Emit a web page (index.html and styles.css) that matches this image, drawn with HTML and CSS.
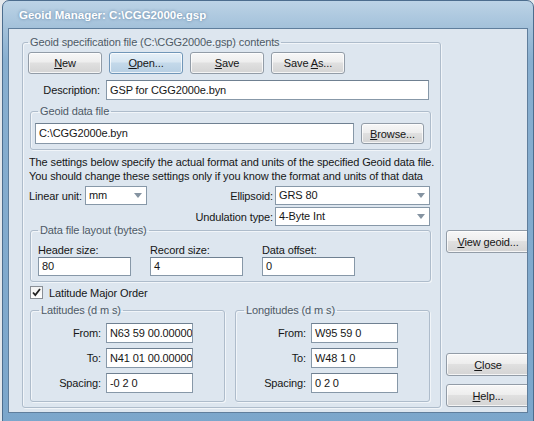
FILE: index.html
```html
<!DOCTYPE html>
<html lang="en">
<head>
	<meta charset="UTF-8">
	<title>Geoid Manager</title>
	<link rel="stylesheet" href="styles.css">
</head>
<body>
	<div class="window">
		<div class="titlebar">
			<span class="title">Geoid Manager: C:\CGG2000e.gsp</span>
		</div>
		<div class="client">
			<fieldset class="group main">
				<legend>Geoid specification file (C:\CGG2000e.gsp) contents</legend>
				<div class="toolbar">
					<button class="btn"><u>N</u>ew</button>
					<button class="btn hot"><u>O</u>pen...</button>
					<button class="btn"><u>S</u>ave</button>
					<button class="btn">Save <u>A</u>s...</button>
				</div>
				<div class="descRow">
					<span class="lbl descLbl">Description:</span>
					<div class="edit descEdit">GSP for CGG2000e.byn</div>
				</div>
				<fieldset class="group dataFile">
					<legend>Geoid data file</legend>
					<div class="fileRow">
						<div class="edit fileEdit">C:\CGG2000e.byn</div>
						<button class="btn browse"><u>B</u>rowse...</button>
					</div>
				</fieldset>
				<p class="note">The settings below specify the actual format and units of the specified Geoid data file.<br>You should change these settings only if you know the format and units of that data<br>file.</p>
				<div class="settings">
					<span class="lbl">Linear unit:</span>
					<div class="combo">mm</div>
					<span class="lbl right">Ellipsoid:</span>
					<div class="combo">GRS 80</div>
					<span></span>
					<span></span>
					<span class="lbl right">Undulation type:</span>
					<div class="combo">4-Byte Int</div>
				</div>
				<fieldset class="group layout">
					<legend>Data file layout (bytes)</legend>
					<div class="layoutCols">
						<div class="col">
							<span class="lbl">Header size:</span>
							<div class="edit">80</div>
						</div>
						<div class="col">
							<span class="lbl">Record size:</span>
							<div class="edit">4</div>
						</div>
						<div class="col">
							<span class="lbl">Data offset:</span>
							<div class="edit">0</div>
						</div>
					</div>
				</fieldset>
				<div class="checkRow">
					<span class="check">
						<svg width="9" height="9" viewBox="0 0 9 9"><path d="M1 4.5 L3.3 7 L8 1" fill="none" stroke="#222" stroke-width="1.8"/></svg>
					</span>
					<span class="lbl">Latitude Major Order</span>
				</div>
				<div class="coords">
					<fieldset class="group coord">
						<legend>Latitudes (d m s)</legend>
						<div class="coordRow"><span class="lbl">From:</span><div class="edit">N63 59 00.00000</div></div>
						<div class="coordRow"><span class="lbl">To:</span><div class="edit">N41 01 00.00000</div></div>
						<div class="coordRow"><span class="lbl">Spacing:</span><div class="edit">-0 2 0</div></div>
					</fieldset>
					<fieldset class="group coord">
						<legend>Longitudes (d m s)</legend>
						<div class="coordRow"><span class="lbl">From:</span><div class="edit">W95 59 0</div></div>
						<div class="coordRow"><span class="lbl">To:</span><div class="edit">W48 1 0</div></div>
						<div class="coordRow"><span class="lbl">Spacing:</span><div class="edit">0 2 0</div></div>
					</fieldset>
				</div>
			</fieldset>
			<div class="side">
				<button class="btn sideBtn"><u>V</u>iew geoid...</button>
				<button class="btn sideBtn close"><u>C</u>lose</button>
				<button class="btn sideBtn help"><u>H</u>elp...</button>
			</div>
		</div>
	</div>
</body>
</html>
```

FILE: styles.css
```css
* {
	box-sizing: border-box;
}
body {
	margin: 0;
	background-color: #e4e8ec;
	font-family: "Liberation Sans", Arial, sans-serif;
	font-size: 11px;
	letter-spacing: -0.12px;
	color: #161616;
	overflow: hidden;
}
.window {
	margin-left: 2px;
	width: 532px;
	height: 440px;
	border: 1px solid #4c6d8e;
	border-radius: 7px 7px 0 0;
	padding: 0 5px;
	background: linear-gradient(#bcd3e6, #a3c1da 27px, #88afd0 60px, #7ba6cb);
}
.titlebar {
	height: 27px;
	display: flex;
	align-items: center;
	padding-left: 11px;
}
.title {
	color: #fff;
	font-weight: bold;
	font-size: 11.5px;
	letter-spacing: 0;
	text-shadow: 0 0 3px rgba(40, 80, 120, 0.6);
}
.client {
	height: 385px;
	border: 1px solid #5f7e9c;
	background-color: #dde6ef;
	display: flex;
	align-items: flex-start;
	overflow: hidden;
}

/* group boxes */
.group {
	margin: 0;
	border: 1px solid #aebccb;
	border-radius: 3px;
	box-shadow: inset 1px 1px 0 rgba(255,255,255,0.6), 1px 1px 0 rgba(255,255,255,0.6);
	padding: 0;
	min-width: 0;
}
.group legend {
	padding: 0 2px;
	line-height: 13px;
	color: #4e5a66;
}
.main {
	margin: 7px 0 0 13px;
	width: 419px;
	flex: none;
	padding: 3px 0 5px 5px;
}

/* buttons */
.btn {
	font: inherit;
	letter-spacing: inherit;
	color: #161616;
	height: 22px;
	padding: 0;
	border: 1px solid #929ca7;
	border-radius: 3px;
	background: linear-gradient(#f7f7f7, #eeeeee 45%, #e0e0e0 50%, #d4d4d4);
	box-shadow: inset 0 0 0 1px rgba(255,255,255,0.75);
}
.btn.hot {
	border-color: #7096b8;
	background: linear-gradient(#e6f0f8, #d7e6f2 45%, #c4d9ea 50%, #b7cfe3);
}
.toolbar {
	display: flex;
	gap: 7px;
}
.toolbar .btn {
	width: 74px;
}

/* edits */
.edit {
	height: 20px;
	background-color: #fff;
	border: 1px solid #8798a8;
	border-top-color: #6f8091;
	padding: 2px 0 0 3px;
	line-height: 14px;
	white-space: nowrap;
	overflow: hidden;
	color: #161616;
}
.lbl {
	white-space: nowrap;
}

.descRow {
	display: flex;
	align-items: center;
	margin-top: 6px;
}
.descLbl {
	width: 72px;
	text-align: right;
	margin-right: 6px;
}
.descEdit {
	width: 323px;
}

.dataFile {
	margin: 5px 0 0 2px;
	width: 401px;
	padding: 5px 0 5px 4px;
}
.dataFile legend {
	margin-left: 3px;
}
.fileRow {
	display: flex;
	gap: 7px;
}
.fileEdit {
	width: 319px;
	height: 21px;
}
.browse {
	width: 63px;
	height: 21px;
}

.note {
	margin: 5px 0 0 1px;
	height: 31px;
	line-height: 14px;
	overflow: hidden;
	white-space: nowrap;
}

.settings {
	margin-left: 1px;
	width: 401px;
	display: grid;
	grid-template-columns: 55px 62px 1fr 155px;
	column-gap: 1px;
	row-gap: 2px;
	align-items: center;
}
.settings .right {
	text-align: right;
	padding-right: 1px;
}
.combo {
	position: relative;
	height: 19px;
	background-color: #fff;
	border: 1px solid #8798a8;
	padding: 1px 0 0 3px;
	line-height: 15px;
}
.combo::after {
	content: "";
	position: absolute;
	right: 4px;
	top: 6px;
	border-left: 4px solid transparent;
	border-right: 4px solid transparent;
	border-top: 5px solid #8593a1;
}

.layout {
	margin: -1px 0 0 2px;
	width: 401px;
	padding: 8px 0 5px 7px;
}
.layout legend {
	line-height: 11px;
}
.layoutCols {
	display: flex;
	gap: 19px;
}
.layoutCols .col {
	display: flex;
	flex-direction: column;
	width: 93px;
}
.layoutCols .lbl {
	line-height: 13px;
}
.layoutCols .edit {
	height: 19px;
	padding-top: 1px;
}

.checkRow {
	display: flex;
	align-items: center;
	gap: 6px;
	margin: 4px 0 0 2px;
	height: 13px;
}
.check {
	width: 13px;
	height: 13px;
	border: 1px solid #8a8f96;
	background: linear-gradient(#f2f2f2, #fff);
	display: flex;
	align-items: center;
	justify-content: center;
}

.coords {
	display: flex;
	gap: 10px;
	margin: 5px 0 0 2px;
}
.coord {
	width: 195px;
	padding: 7px 0 8px 0;
	display: flex;
	flex-direction: column;
	gap: 5px;
}
.coord legend {
	margin-left: 8px;
	line-height: 12px;
}
.coordRow {
	display: flex;
	align-items: center;
}
.coordRow .lbl {
	width: 71px;
	text-align: right;
	padding-right: 1px;
}
.coordRow .edit {
	margin-left: 4px;
	width: 87px;
}

/* right column */
.side {
	margin-left: 5px;
	padding-top: 201px;
	display: flex;
	flex-direction: column;
	flex: none;
}
.sideBtn {
	width: 84px;
	height: 23px;
}
.close {
	margin-top: 100px;
}
.help {
	margin-top: 8px;
}
```
